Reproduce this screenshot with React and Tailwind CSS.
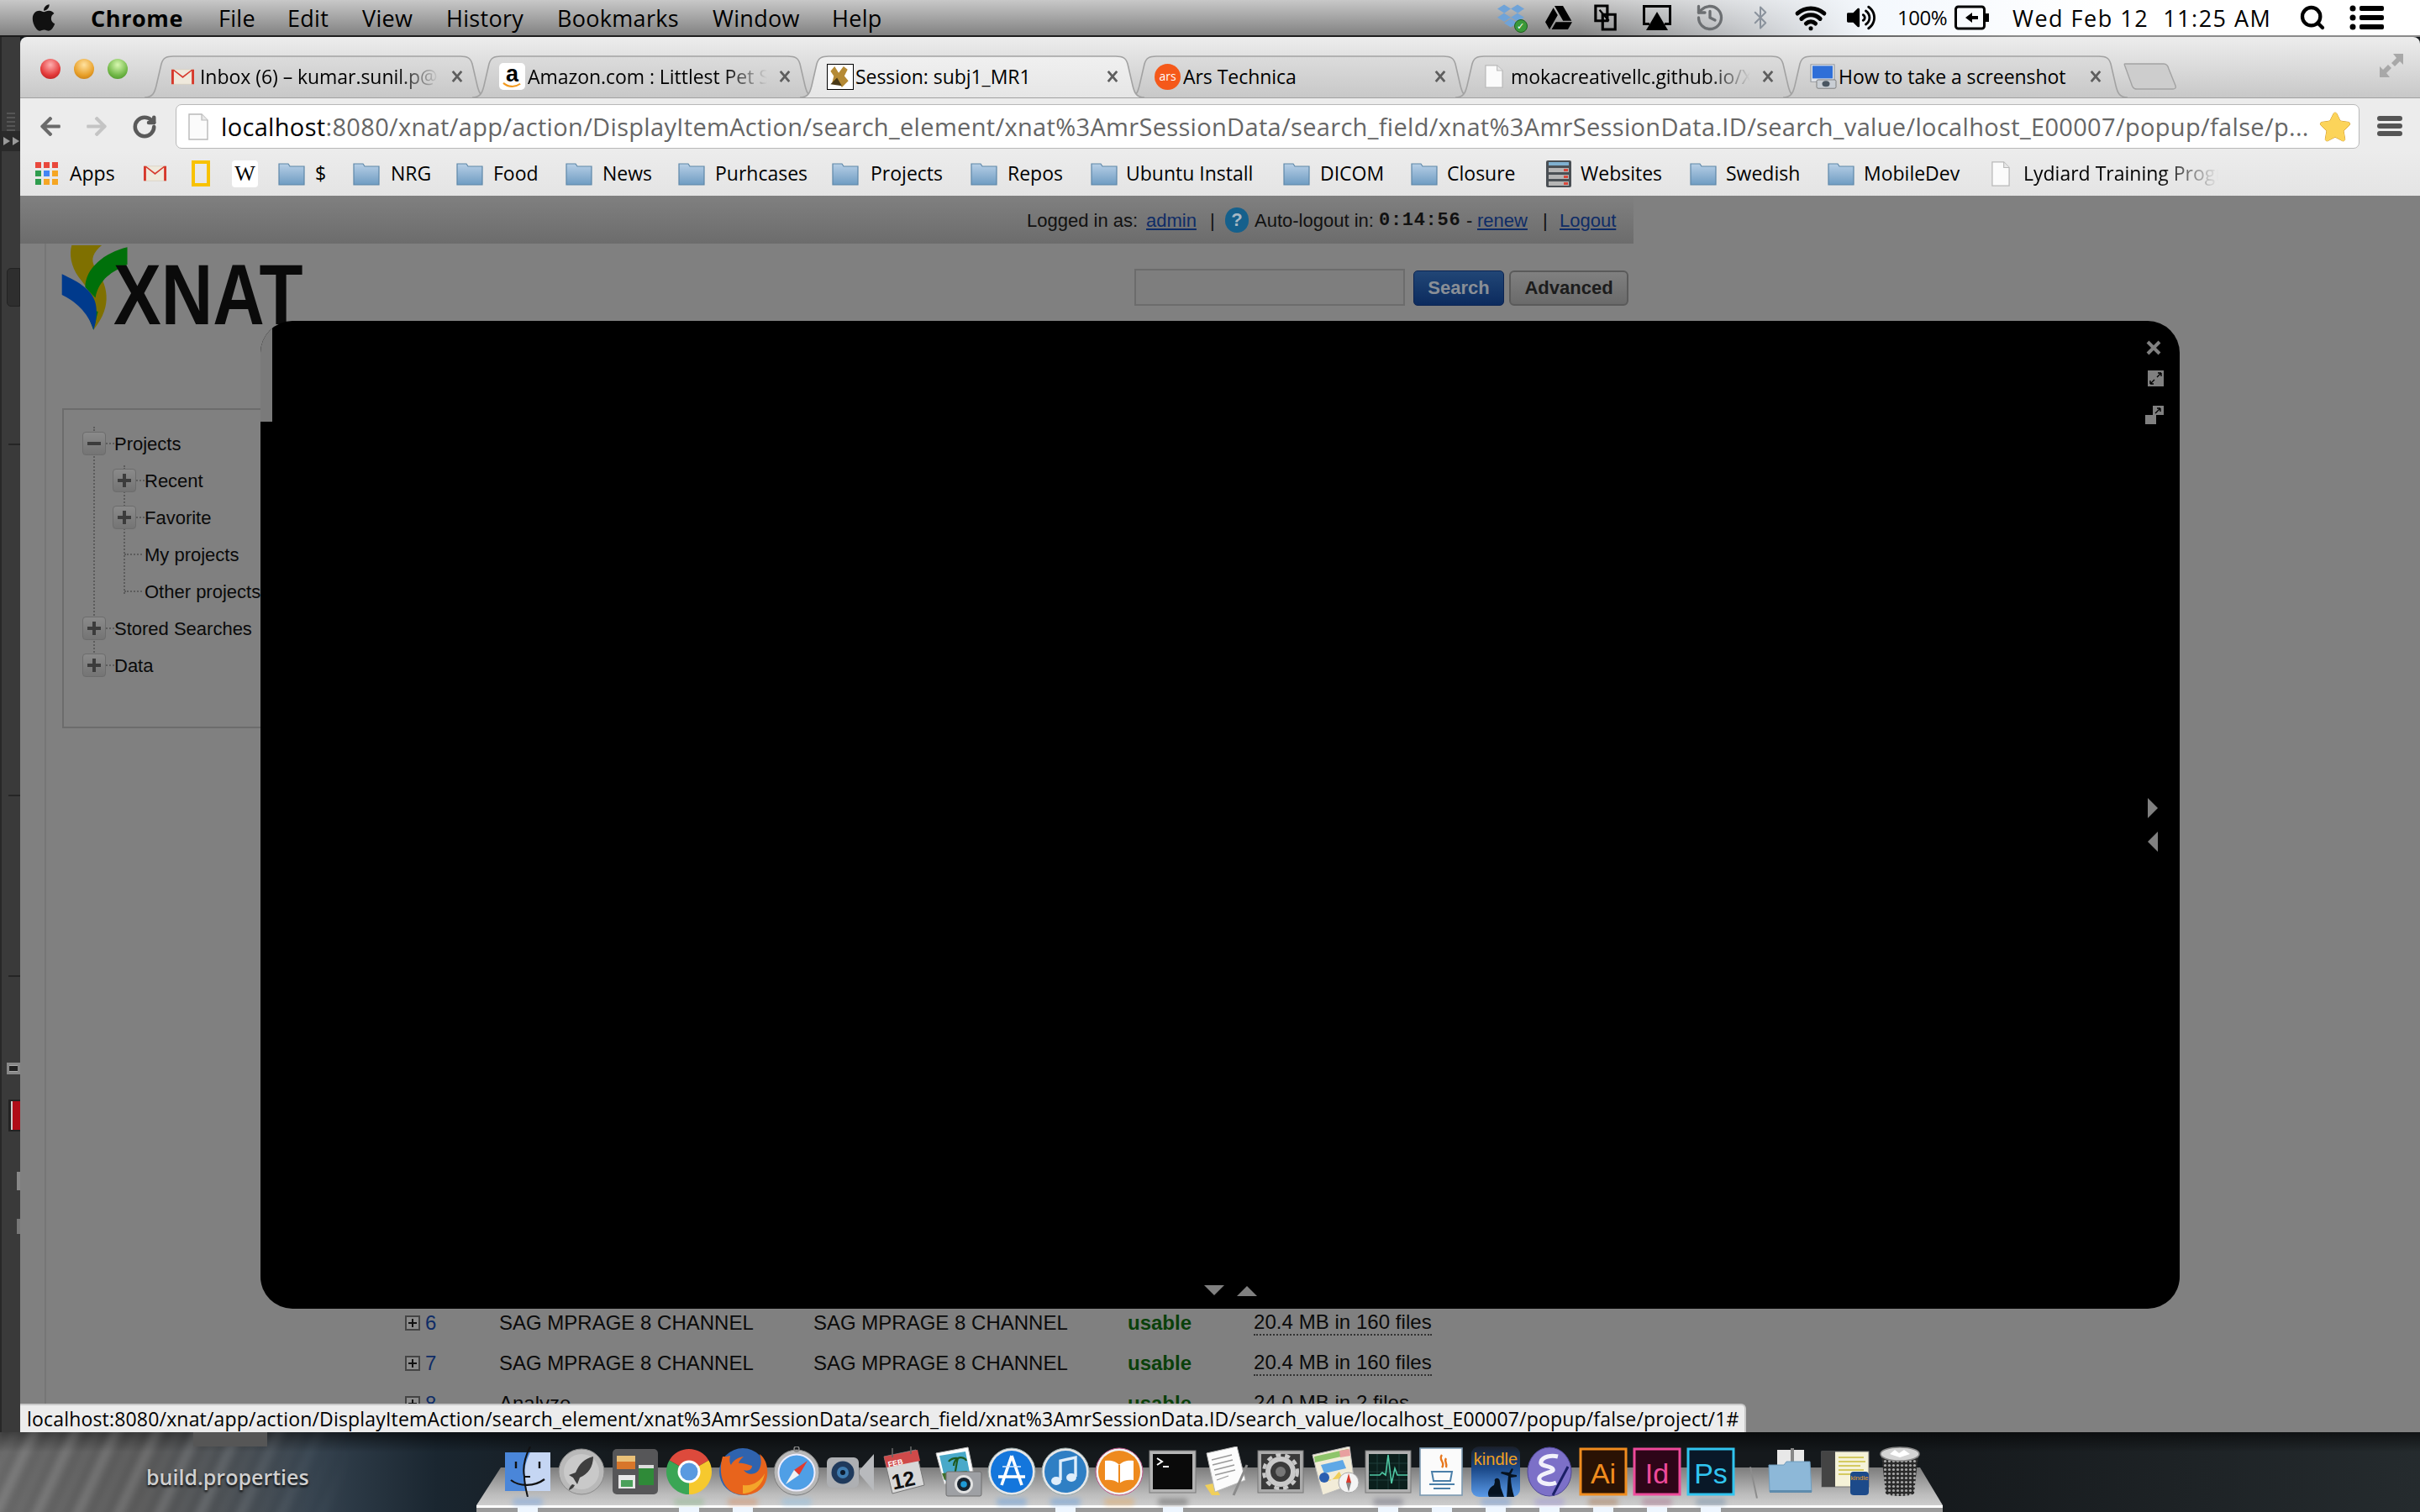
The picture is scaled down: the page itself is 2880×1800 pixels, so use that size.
import React from 'react';
import { FaApple, FaDropbox, FaGoogleDrive, FaVolumeUp, FaStar, FaArrowLeft, FaArrowRight } from 'react-icons/fa';
import { History, Bluetooth, Wifi, Search, RotateCw } from 'lucide-react';

const menus = [
  ['Chrome', 'w-[152px] font-bold text-[27px] tracking-[0.6px]'], ['File', 'w-[82px]'], ['Edit', 'w-[89px]'], ['View', 'w-[100px]'],
  ['History', 'w-[132px]'], ['Bookmarks', 'w-[185px]'], ['Window', 'w-[142px]'], ['Help', 'w-[782px]'],
];

function Cell({ className, children }) {
  return <div className={`flex items-center justify-center h-full ${className}`}>{children}</div>;
}

function MenuBar() {
  return (
    <div className="h-[44px] flex flex-col shrink-0 bg-[linear-gradient(to_right,transparent_1880px,#f4f8fd_2230px,#ffffff_2500px),linear-gradient(to_bottom,#c8c8c8,#7e7e7e)]">
      <div className="h-[42px] flex items-center text-[27px] leading-none text-black tracking-[0.3px]">
        <Cell className="w-[108px]"><FaApple className="w-[34px] h-[36px] text-[#111] mr-[5px]" /></Cell>
        {menus.map(([t, c]) => <div key={t} className={c}>{t}</div>)}
        <Cell className="w-[55px]">
          <span className="relative block w-[36px] h-[36px]">
            <FaDropbox className="w-[32px] h-[32px] text-[#6fa3d8]" />
            <span className="absolute right-0 bottom-0 w-[16px] h-[16px] rounded-full bg-[#3a9a3a] border border-[#1f5f1f] text-white text-[11px] leading-[14px] text-center">✓</span>
          </span>
        </Cell>
        <Cell className="w-[56px]"><FaGoogleDrive className="w-[32px] h-[32px] text-black" /></Cell>
        <Cell className="w-[55px]">
          <svg viewBox="0 0 30 34" className="w-[28px] h-[32px]" fill="none" stroke="#000" strokeWidth="3.4"><path d="M2 2h15v19H2zM11 13h16v19H11z" /><path d="M7 7l12 14" strokeWidth="2.4" /></svg>
        </Cell>
        <Cell className="w-[68px]">
          <svg viewBox="0 0 38 34" className="w-[38px] h-[34px]"><path d="M2 2h34v24h-8v-3h5V5H5v18h5v3H2z" fill="#000" /><path d="M19 10l13 22H6z" fill="#000" /></svg>
        </Cell>
        <Cell className="w-[58px]"><History className="w-[36px] h-[36px] text-[#6c6f72]" strokeWidth={2.2} /></Cell>
        <Cell className="w-[62px]"><Bluetooth className="w-[30px] h-[36px] text-[#8a929c]" strokeWidth={1.6} /></Cell>
        <Cell className="w-[58px]"><Wifi className="w-[44px] h-[38px] text-black" strokeWidth={3.2} /></Cell>
        <Cell className="w-[62px]"><FaVolumeUp className="w-[34px] h-[32px] text-black" /></Cell>
        <div className="w-[72px] pl-[12px] text-[24px] tracking-[-0.5px]">100%</div>
        <Cell className="w-[58px]">
          <svg viewBox="0 0 42 30" className="w-[42px] h-[30px]"><rect x="1.5" y="2" width="34" height="26" rx="3" fill="none" stroke="#000" strokeWidth="3" /><rect x="37" y="10" width="4" height="10" fill="#000" /><path d="M13 15l8-6v4h7v4h-7v4z" fill="#000" /></svg>
        </Cell>
        <div className="ml-[19px] w-[340px] whitespace-pre tracking-[1.5px]">Wed Feb 12  11:25 AM</div>
        <Cell className="w-[34px]"><Search className="w-[32px] h-[32px] text-black" strokeWidth={3.2} /></Cell>
        <Cell className="w-[96px]">
          <svg viewBox="0 0 42 30" className="w-[42px] h-[30px]" fill="#000"><circle cx="4" cy="4" r="3.5" /><circle cx="4" cy="15" r="3.5" /><circle cx="4" cy="26" r="3.5" /><rect x="12" y="1" width="29" height="6" rx="2" /><rect x="12" y="12" width="29" height="6" rx="2" /><rect x="12" y="23" width="29" height="6" rx="2" /></svg>
        </Cell>
      </div>
      <div className="h-[2px] bg-[linear-gradient(to_right,#1c1c1c_1900px,#8a8a8a_2400px)]" />
    </div>
  );
}

function LeftStrip() {
  return (
    <div className="w-[24px] shrink-0 bg-[#3a3a3a] border-l-2 border-[#282828] flex flex-col overflow-hidden">
      <div className="h-[112px] flex flex-col items-center justify-end gap-[3px]">
        {[0, 1, 2, 3, 4].map((i) => <div key={i} className="w-[10px] h-[2px] bg-[#555]" />)}
      </div>
      <div className="h-[24px] bg-[#2a2a2a] flex items-center justify-end gap-[3px] pr-[1px]">
        <span className="w-0 h-0 border-y-[5px] border-y-transparent border-l-[8px] border-l-[#9a9a9a]" />
        <span className="w-0 h-0 border-y-[5px] border-y-transparent border-l-[8px] border-l-[#9a9a9a]" />
      </div>
      <div className="mt-[139px] ml-[6px] h-[46px] bg-[#2e2e2e] border border-[#222] rounded-l-[5px]" />
      <div className="mt-[163px] ml-[8px] h-[2px] bg-[#252525]" />
      <div className="mt-[416px] ml-[8px] h-[2px] bg-[#252525]" />
      <div className="mt-[213px] ml-[8px] h-[2px] bg-[#252525]" />
      <div className="mt-[102px] ml-[6px] h-[14px] bg-[#aaa] border-[3px] border-[#888] flex items-center"><div className="w-[10px] h-[6px] bg-[#222]" /></div>
      <div className="mt-[30px] ml-[8px] h-[38px] bg-[#222] pl-[3px] py-[2px]"><div className="w-full h-full bg-[#b00d18] border-l-2 border-[#ccc]" /></div>
      <div className="mt-[48px] ml-[18px] h-[22px] border-2 border-[#888]" />
      <div className="mt-[34px] ml-[18px] h-[18px] border-2 border-[#777]" />
    </div>
  );
}

function GmailIcon({ className }) {
  return (
    <svg viewBox="0 0 28 24" preserveAspectRatio="none" className={className}>
      <rect x="0.5" y="1" width="27" height="22" fill="#efe9dc" stroke="#d8d0c0" />
      <path d="M14 14L3 3v20H0V1h3l11 10L25 1h3v22h-3V3z" fill="#d6392c" />
    </svg>
  );
}

function DocIcon({ className }) {
  return (
    <svg viewBox="0 0 24 32" preserveAspectRatio="none" className={className}>
      <path d="M1 1h15l7 7v23H1z" fill="#fbfbfb" stroke="#b9b9b9" strokeWidth="1.4" />
      <path d="M16 1v7h7" fill="#e8e8e8" stroke="#b9b9b9" strokeWidth="1.2" />
    </svg>
  );
}

const FavAmazon = (
  <span className="relative w-[31px] h-[32px] bg-white rounded-[5px] flex justify-center font-['Liberation_Sans',sans-serif] font-bold text-[27px] leading-[27px] text-black">
    a
    <svg viewBox="0 0 26 8" className="absolute left-[3px] bottom-[2px] w-[25px] h-[7px]"><path d="M1 1c7 6 16 6 23 1" fill="none" stroke="#f39a1e" strokeWidth="2.4" /></svg>
  </span>
);
const FavXnat = (
  <span className="w-[32px] h-[31px] bg-white border border-black block">
    <svg viewBox="0 0 30 30" className="w-full h-full"><path d="M8 2l5 8 6-8 5 4-4 8 5 6-8 8-5-8-7 2 2-8-4-6z" fill="#b58a35" /><path d="M3 24l8-8 6 10z" fill="#4a3a18" /></svg>
  </span>
);
const FavArs = <span className="w-[31px] h-[31px] rounded-full bg-[#f5591a] text-white text-[14px] leading-[30px] text-center block">ars</span>;
const FavShot = (
  <span className="block w-[32px] h-[30px]">
    <svg viewBox="0 0 32 38" preserveAspectRatio="none" className="w-full h-full"><rect x="1" y="1" width="28" height="26" fill="#dfe3e8" stroke="#8a8f96" /><rect x="3" y="3" width="24" height="19" fill="#2f6fd8" /><rect x="8" y="24" width="23" height="13" rx="2" fill="#c9ced4" stroke="#777" /><circle cx="19" cy="30" r="4.5" fill="#4a5662" /></svg>
  </span>
);

const tabs = [
  { t: 'Inbox (6) – kumar.sunil.p@', fav: <GmailIcon className="w-[27px] h-[19px]" />, fade: true },
  { t: 'Amazon.com : Littlest Pet Shop', fav: FavAmazon, fade: true },
  { t: 'Session: subj1_MR1', fav: FavXnat, active: true },
  { t: 'Ars Technica', fav: FavArs },
  { t: 'mokacreativellc.github.io/XNAT', fav: <DocIcon className="w-[22px] h-[28px] ml-[3px]" />, fade: true },
  { t: 'How to take a screenshot', fav: FavShot },
];

function Tab({ tab, first }) {
  return (
    <div className={`relative w-[410px] h-[50px] shrink-0 ${first ? '' : '-ml-[20px]'} ${tab.active ? 'z-10' : ''}`}>
      <svg viewBox="0 0 410 51" preserveAspectRatio="none" className="absolute inset-0 w-full h-[51px]">
        <defs>
          <linearGradient id="tabIn" x1="0" y1="0" x2="0" y2="1"><stop offset="0" stopColor="#dcdcdc" /><stop offset="1" stopColor="#c8c8c8" /></linearGradient>
          <linearGradient id="tabAc" x1="0" y1="0" x2="0" y2="1"><stop offset="0" stopColor="#f0f0f0" /><stop offset="1" stopColor="#e6e6e6" /></linearGradient>
        </defs>
        <path d="M0 50C10 50 12 44 14 36L20 10C22 3 26 1 34 1L376 1C384 1 388 3 390 10L396 36C398 44 400 50 410 50" fill={tab.active ? 'url(#tabAc)' : 'url(#tabIn)'} stroke="#a2a2a2" strokeWidth="1.6" />
      </svg>
      <div className="absolute inset-0 flex items-center pl-[32px] text-[23px] text-black">
        <span className="w-[32px] flex justify-start shrink-0">{tab.fav}</span>
        <span className={`w-[285px] ml-[2px] overflow-hidden whitespace-nowrap tracking-[-0.05px] ${tab.fade ? '[mask-image:linear-gradient(to_right,#000_82%,transparent_100%)]' : ''}`}>{tab.t}</span>
        <span className="w-[42px] flex justify-center">
          <svg viewBox="0 0 16 18" className="w-[14px] h-[16px]"><path d="M2 2l12 14M14 2L2 16" stroke="#5e5e5e" strokeWidth="3.2" /></svg>
        </span>
      </div>
    </div>
  );
}

function TabStrip() {
  return (
    <div className="relative h-[73px] shrink-0 flex items-end bg-[linear-gradient(to_bottom,#ededed,#c8c8c8)] rounded-t-[8px] pl-[24px] border-b border-[#a2a2a2]">
      <div className="self-start mt-[26px] flex gap-[16px] mr-[20px]">
        <span className="w-[24px] h-[24px] rounded-full bg-[radial-gradient(circle_at_50%_30%,#ffb0b0,#e33a3a_60%,#a81818)]" />
        <span className="w-[24px] h-[24px] rounded-full bg-[radial-gradient(circle_at_50%_30%,#ffe2a0,#e8a02a_60%,#b87010)]" />
        <span className="w-[24px] h-[24px] rounded-full bg-[radial-gradient(circle_at_50%_30%,#d8f8b0,#72b848_60%,#3f8a20)]" />
      </div>
      {tabs.map((t, i) => <Tab key={t.t} tab={t} first={i === 0} />)}
      <svg viewBox="0 0 64 32" className="w-[64px] h-[32px] -ml-[5px] mb-[9px] shrink-0">
        <path d="M2 1h46c3 0 5 2 6 6l8 20c1 3-1 4-3 4H16c-3 0-5-1-6-5L2 4c-1-2-1-3 0-3z" fill="#cdcdcd" stroke="#a2a2a2" strokeWidth="1.4" />
      </svg>
      <svg viewBox="0 0 30 30" className="w-[30px] h-[30px] ml-[240px] mb-[23px] shrink-0" fill="#a8a8a8"><path d="M29 1v13l-4-4-6 6-4-4 6-6-4-5zM1 29V16l4 4 6-6 4 4-6 6 4 5z" /></svg>
    </div>
  );
}

function Toolbar() {
  return (
    <div className="h-[63px] shrink-0 flex items-start pt-[7px] bg-[#ececec]">
      <div className="w-[185px] h-[53px] flex items-center shrink-0">
        <FaArrowLeft className="ml-[21px] w-[30px] h-[27px] text-[#6a6a6a]" />
        <FaArrowRight className="ml-[25px] w-[30px] h-[27px] text-[#c4c4c4]" />
        <RotateCw className="ml-[27px] w-[30px] h-[30px] text-[#5a5a5a]" strokeWidth={3.6} />
      </div>
      <div className="w-[2599px] h-[53px] bg-white border border-[#b8b8b8] rounded-[7px] flex items-center pl-[14px] shrink-0">
        <DocIcon className="w-[24px] h-[32px] shrink-0" />
        <div className="ml-[15px] flex-1 text-[29px] tracking-[0.33px] text-[#666] whitespace-nowrap overflow-hidden"><span className="text-black">localhost</span>:8080/xnat/app/action/DisplayItemAction/search_element/xnat%3AmrSessionData/search_field/xnat%3AmrSessionData.ID/search_value/localhost_E00007/popup/false/p...</div>
        <FaStar className="w-[38px] h-[36px] text-[#fcd45a] mr-[9px] shrink-0 stroke-[#c88a10] [stroke-width:14px] [paint-order:stroke]" />
      </div>
      <div className="ml-[21px] mt-[14px] flex flex-col gap-[3px] shrink-0">
        <span className="w-[30px] h-[6px] rounded-[3px] bg-[#555]" />
        <span className="w-[30px] h-[6px] rounded-[3px] bg-[#555]" />
        <span className="w-[30px] h-[6px] rounded-[3px] bg-[#555]" />
      </div>
    </div>
  );
}

function Folder() {
  return (
    <svg viewBox="0 0 32 28" className="w-[32px] h-[28px] shrink-0">
      <defs><linearGradient id="fld" x1="0" y1="0" x2="0" y2="1"><stop offset="0" stopColor="#b7cfe6" /><stop offset="1" stopColor="#6f9cc2" /></linearGradient></defs>
      <path d="M1 27V2h11l2 3h17v22z" fill="url(#fld)" stroke="#5e87a8" strokeWidth="1.2" />
    </svg>
  );
}

const bookmarks = [
  { t: 'Apps', w: 'w-[129px]', g: 'ml-[14px]', i: (
    <svg viewBox="0 0 27 27" className="w-[27px] h-[27px] shrink-0">
      <path d="M0 0h7v7H0zM10 0h7v7h-7zM20 0h7v7h-7z" fill="#e9483c" />
      <path d="M0 10h7v7H0z" fill="#2f9d4e" /><path d="M10 10h7v7h-7z" fill="#4285f4" /><path d="M20 10h7v7h-7z" fill="#f5a623" />
      <path d="M0 20h7v7H0z" fill="#2f9d4e" /><path d="M10 20h7v7h-7z" fill="#f5a623" /><path d="M20 20h7v7h-7z" fill="#f5a623" />
    </svg>) },
  { w: 'w-[57px]', i: <GmailIcon className="w-[27px] h-[19px]" /> },
  { w: 'w-[48px]', i: <span className="w-[22px] h-[31px] border-[4px] border-[#f8c200] block" /> },
  { w: 'w-[55px]', i: <span className="w-[31px] h-[32px] bg-white rounded-[4px] font-['Liberation_Serif',serif] text-[26px] leading-[32px] text-center text-black block">W</span> },
  { t: '$', w: 'w-[89px]', g: 'ml-[12px]', f: 1 },
  { t: 'NRG', w: 'w-[123px]', g: 'ml-[13px]', f: 1 },
  { t: 'Food', w: 'w-[130px]', g: 'ml-[12px]', f: 1 },
  { t: 'News', w: 'w-[134px]', g: 'ml-[12px]', f: 1 },
  { t: 'Purhcases', w: 'w-[183px]', g: 'ml-[12px]', f: 1 },
  { t: 'Projects', w: 'w-[165px]', g: 'ml-[14px]', f: 1 },
  { t: 'Repos', w: 'w-[143px]', g: 'ml-[12px]', f: 1 },
  { t: 'Ubuntu Install', w: 'w-[229px]', g: 'ml-[10px]', f: 1 },
  { t: 'DICOM', w: 'w-[152px]', g: 'ml-[12px]', f: 1 },
  { t: 'Closure', w: 'w-[161px]', g: 'ml-[11px]', f: 1 },
  { t: 'Websites', w: 'w-[171px]', g: 'ml-[11px]', i: (
    <svg viewBox="0 0 30 32" className="w-[30px] h-[32px] shrink-0"><rect width="30" height="32" rx="2" fill="#4a4f54" /><rect x="3" y="2" width="24" height="4" fill="#7fb0d0" /><rect x="3" y="9" width="24" height="5" fill="#b5b5b5" /><rect x="3" y="17" width="24" height="5" fill="#b5b5b5" /><rect x="3" y="25" width="24" height="5" fill="#b5b5b5" /><path d="M21 10h5v3h-5zM21 18h5v3h-5zM21 26h5v3h-5z" fill="#d8483c" /></svg>) },
  { t: 'Swedish', w: 'w-[164px]', g: 'ml-[11px]', f: 1 },
  { t: 'MobileDev', w: 'w-[195px]', g: 'ml-[11px]', f: 1 },
  { t: 'Lydiard Training Program', w: 'w-[270px]', g: 'ml-[16px]', fade: 1, i: <DocIcon className="w-[22px] h-[30px] shrink-0" /> },
];

function BookmarkBar() {
  return (
    <div className="h-[53px] shrink-0 flex items-center pl-[18px] bg-[linear-gradient(to_bottom,#ececec,#e4e4e4)] text-[23px] text-black">
      {bookmarks.map((b, i) => (
        <div key={i} className={`flex items-center shrink-0 overflow-hidden ${b.w}`}>
          {b.f ? <Folder /> : b.i}
          {b.t && <span className={`${b.g} whitespace-nowrap ${b.fade ? 'w-[232px] overflow-hidden [mask-image:linear-gradient(to_right,#000_70%,transparent_100%)]' : ''}`}>{b.t}</span>}
        </div>
      ))}
    </div>
  );
}

function TreeBox({ minus }) {
  return (
    <span className="relative w-[28px] h-[28px] shrink-0 rounded-[4px] border border-[#6c6c6c] bg-[linear-gradient(to_bottom,#8a8a8a,#747474)] flex items-center justify-center">
      <span className="block w-[16px] h-[4px] bg-[#3c3c3c]" />
      {!minus && <span className="absolute block w-[4px] h-[16px] bg-[#3c3c3c]" />}
    </span>
  );
}

function TreeRow({ label, indent, box, minus }) {
  return (
    <div className={`h-[44px] flex items-center ${indent ? 'pl-[36px]' : ''}`}>
      {box ? <TreeBox minus={minus} /> : <span className="w-[28px] shrink-0 h-[2px]" />}
      <span className={`w-[10px] border-t-2 border-dotted border-[#5c5c5c] ${box ? '' : 'w-[21px] -ml-[14px] mr-[3px]'}`} />
      <span className="whitespace-nowrap">{label}</span>
    </div>
  );
}

function Sidebar() {
  return (
    <div className="relative w-[300px] h-[381px] ml-[50px] border-2 border-[#6c6c6c] pl-[22px] pt-[18px] text-[22px] text-[#0a0a0a] shrink-0">
      <span className="absolute left-[35px] top-[20px] h-[272px] border-l-2 border-dotted border-[#5c5c5c]" />
      <span className="absolute left-[71px] top-[66px] h-[153px] border-l-2 border-dotted border-[#5c5c5c]" />
      <div className="relative">
        <TreeRow label="Projects" box minus />
        <TreeRow label="Recent" box indent />
        <TreeRow label="Favorite" box indent />
        <TreeRow label="My projects" indent />
        <TreeRow label="Other projects" indent />
        <TreeRow label="Stored Searches" box />
        <TreeRow label="Data" box />
      </div>
    </div>
  );
}

const rows = [
  { n: '6', a: 'SAG MPRAGE 8 CHANNEL', b: 'SAG MPRAGE 8 CHANNEL', s: '20.4 MB in 160 files' },
  { n: '7', a: 'SAG MPRAGE 8 CHANNEL', b: 'SAG MPRAGE 8 CHANNEL', s: '20.4 MB in 160 files' },
  { n: '8', a: 'Analyze', b: '', s: '24.0 MB in 2 files' },
];

function SeriesRow({ r }) {
  return (
    <div className="h-[48px] flex items-center text-[24px] text-[#0a0a0a] whitespace-nowrap">
      <span className="relative w-[18px] h-[18px] border-2 border-[#444] bg-[#8c8c8c] flex items-center justify-center shrink-0">
        <span className="block w-[10px] h-[2px] bg-[#111]" /><span className="absolute block w-[2px] h-[10px] bg-[#111]" />
      </span>
      <span className="w-[94px] pl-[6px] text-[#0f2c66] shrink-0">{r.n}</span>
      <span className="w-[374px] shrink-0">{r.a}</span>
      <span className="w-[374px] shrink-0">{r.b}</span>
      <span className="w-[150px] font-bold text-[#0a400a] shrink-0">usable</span>
      <span className="border-b-2 border-dotted border-[#333] leading-[28px] tracking-[0.05px]">{r.s}</span>
    </div>
  );
}

function Logo() {
  return (
    <div className="relative w-[300px] h-[196px] ml-[47px] shrink-0">
      <svg viewBox="160 145 190 255" preserveAspectRatio="none" className="absolute left-0 top-0 w-[85px] h-[106px]">
        <path d="M192 150L272 150C250 170 240 190 255 215C285 260 305 320 250 392C270 330 240 280 210 240C190 210 185 175 192 150Z" fill="#7f7000" />
        <path d="M340 155L340 205C300 225 265 245 255 300L228 270C228 215 280 170 340 155Z" fill="#00700a" />
        <path d="M228 330L250 392L262 340Z" fill="#00700a" />
        <path d="M166 232C210 255 260 280 258 340C258 370 252 385 250 392C235 340 200 310 166 292Z" fill="#003a8c" />
      </svg>
      <span className="absolute left-[64px] top-[10px] origin-left scale-x-[0.835] text-[102px] leading-[102px] font-bold text-[#0a0a0a]">XNAT</span>
    </div>
  );
}

function Modal() {
  return (
    <div className="absolute left-[286px] top-[149px] w-[2284px] h-[1176px] bg-black rounded-[38px] overflow-hidden z-20">
      <div className="absolute left-0 top-0 w-[14px] h-[120px] bg-[#7a7a7a]" />
      <svg viewBox="0 0 18 18" className="absolute left-[2244px] top-[23px] w-[18px] h-[18px]"><path d="M2 2l14 14M16 2L2 16" stroke="#808080" strokeWidth="4" /></svg>
      <svg viewBox="0 0 19 19" className="absolute left-[2246px] top-[59px] w-[19px] h-[19px]"><rect width="19" height="19" fill="#808080" /><path d="M3 16l5-5M3 16v-4M3 16h4M16 3l-5 5M16 3v4M16 3h-4" stroke="#000" strokeWidth="1.4" fill="none" /></svg>
      <svg viewBox="0 0 22 22" className="absolute left-[2243px] top-[101px] w-[22px] h-[22px]"><rect x="0" y="11" width="13" height="11" fill="#808080" /><rect x="9" y="0" width="13" height="11" fill="#808080" /><path d="M12 9l6-6M18 3v4M18 3h-4" stroke="#000" strokeWidth="1.4" fill="none" /></svg>
      <span className="absolute left-[2246px] top-[568px] w-0 h-0 border-y-[12px] border-y-transparent border-l-[12px] border-l-[#808080]" />
      <span className="absolute left-[2246px] top-[608px] w-0 h-0 border-y-[12px] border-y-transparent border-r-[12px] border-r-[#808080]" />
      <span className="absolute left-[1123px] top-[1148px] w-0 h-0 border-x-[12px] border-x-transparent border-t-[12px] border-t-[#808080]" />
      <span className="absolute left-[1162px] top-[1149px] w-0 h-0 border-x-[12px] border-x-transparent border-b-[12px] border-b-[#808080]" />
    </div>
  );
}

function Page() {
  return (
    <div className="relative flex-1 overflow-hidden bg-[#808080] font-['Liberation_Sans',sans-serif]">
      <div className="w-[1920px] h-[57px] bg-[linear-gradient(to_bottom,#808080,#6c6c6c)] text-[22px] text-[#111] relative">
        <div className="h-full flex items-center whitespace-pre pt-[1px]">
          <span className="ml-[1198px] w-[142px]">Logged in as:</span>
          <span className="w-[76px] text-[#0f2c66] underline">admin</span>
          <span className="w-[18px]">|</span>
          <span className="w-[35px]"><span className="block w-[28px] h-[30px] rounded-full bg-[#15608c] text-[#a8b8c4] font-bold text-[22px] leading-[30px] text-center">?</span></span>
          <span className="w-[148px]">Auto-logout in:</span>
          <span className="w-[104px] font-['Liberation_Mono',monospace] font-bold text-[22px] tracking-[0.7px]">0:14:56</span>
          <span className="w-[13px]">-</span>
          <span className="w-[78px] text-[#0f2c66] underline">renew</span>
          <span className="w-[20px]">|</span>
          <span className="text-[#0f2c66] underline">Logout</span>
        </div>
      </div>
      <div className="relative flex h-[196px] w-[1914px]">
        <div className="absolute left-[29px] top-0 h-[1500px] border-l-2 border-[#767676]" />
        <Logo />
        <div className="ml-[979px] mt-[30px] flex items-start text-[22px] font-bold">
          <div className="w-[322px] h-[44px] border-2 border-[#6c6c6c] bg-[#7e7e7e]" />
          <div className="ml-[10px] mt-[2px] w-[108px] h-[42px] rounded-[5px] bg-[linear-gradient(to_bottom,#214676,#0c2b5e)] border border-[#0c2452] text-[#8a8f96] flex items-center justify-center pb-[2px]">Search</div>
          <div className="ml-[6px] mt-[2px] w-[142px] h-[42px] rounded-[6px] bg-[linear-gradient(to_bottom,#808080,#6a6a6a)] border-2 border-[#5a5a5a] text-[#1c1c1c] flex items-center justify-center pb-[2px]">Advanced</div>
        </div>
      </div>
      <div className="flex">
        <Sidebar />
        <div className="ml-[108px] pt-[1065px]">
          {rows.map((r) => <SeriesRow key={r.n} r={r} />)}
        </div>
      </div>
      <Modal />
      <div className="absolute left-0 bottom-0 w-[2054px] h-[34px] z-30 bg-[#ececec] border-t-2 border-r-2 border-[#c9c9c9] rounded-tr-[6px] flex items-center pl-[8px] text-[23px] text-black whitespace-nowrap font-['Open_Sans',sans-serif] tracking-[0.18px] overflow-hidden">
        localhost:8080/xnat/app/action/DisplayItemAction/search_element/xnat%3AmrSessionData/search_field/xnat%3AmrSessionData.ID/search_value/localhost_E00007/popup/false/project/1#
      </div>
    </div>
  );
}

const Ic = ({ children, className = '' }) => <svg viewBox="0 0 60 60" className={`w-[60px] h-[60px] ${className}`}>{children}</svg>;

const dockIcons = [
  <Ic><rect x="3" y="7" width="54" height="46" fill="#c5d6f3" /><path d="M3 7h30c-6 12-8 22-6 30 -2 4 0 10 1 16H3z" fill="#4a86d9" /><path d="M33 0C26 14 24 26 26 36h7M26 36c0 8 2 16 4 24" stroke="#111" strokeWidth="2" fill="none" /><path d="M10 40c10 8 28 8 40-1" stroke="#111" strokeWidth="2.2" fill="none" /><path d="M16 18v8M44 18v8" stroke="#111" strokeWidth="2.4" /></Ic>,
  <Ic><circle cx="30" cy="30" r="27" fill="#b9b9b9" stroke="#8c8c8c" /><circle cx="30" cy="30" r="21" fill="#c9c9c9" /><path d="M44 12c-10 2-17 9-21 19l-8 3 5 3 3 5 2 3 3-8c10-4 16-13 16-25z" fill="#3e3e3e" /><path d="M19 45c-3 3-4 5-4 7 3-1 6-3 7-6z" fill="#3e3e3e" /></Ic>,
  <Ic><rect x="3" y="3" width="54" height="54" rx="5" fill="#565658" /><rect x="8" y="11" width="22" height="16" fill="#d8762a" /><rect x="8" y="11" width="22" height="7" fill="#e9c078" /><rect x="34" y="22" width="18" height="24" fill="#2f8a38" /><rect x="34" y="22" width="18" height="4" fill="#ddd" /><rect x="10" y="34" width="20" height="16" fill="#e8e8e8" /><rect x="13" y="40" width="14" height="8" fill="#4aa05a" /></Ic>,
  <Ic><path d="M6.6 16.5A27 27 0 0 1 53.4 16.5L30 30z" fill="#dd4a3c" /><path d="M53.4 16.5A27 27 0 0 1 30 57L30 30z" fill="#f6c92e" /><path d="M30 57A27 27 0 0 1 6.6 16.5L30 30z" fill="#3aa655" /><circle cx="30" cy="30" r="13.5" fill="#fff" /><circle cx="30" cy="30" r="10.5" fill="#5a9ae0" /></Ic>,
  <Ic><circle cx="30" cy="30" r="28" fill="#2f63ae" /><path d="M6 12c-4 14-3 30 8 40 10 8 28 8 38-2 8-8 9-22 5-32-2-4-4-7-7-9 3 8 2 18-4 22-5 3-12 2-15-3 6 2 10-1 10-5-6-1-9-4-16-3 1-4 4-6 6-8-7 1-13 5-15 10-2-3-2-7-1-11-3 1-6 1-9 1z" fill="#e8641c" /><path d="M30 56c12 0 24-10 26-24-4 8-14 16-26 14z" fill="#f4a52a" /></Ic>,
  <Ic><circle cx="30" cy="31" r="27" fill="#b8b8b8" stroke="#7e7e7e" /><circle cx="30" cy="3" r="3" fill="none" stroke="#888" strokeWidth="1.4" /><circle cx="30" cy="31" r="21.5" fill="#4f9fe6" /><circle cx="30" cy="31" r="21.5" fill="none" stroke="#eef" strokeWidth="2" /><path d="M43 17L27 28l6 6z" fill="#e33b2e" /><path d="M17 45l10-17 6 6z" fill="#f2f2f2" /></Ic>,
  <Ic><rect x="2" y="13" width="38" height="36" rx="6" fill="#aeb0b3" /><circle cx="21" cy="31" r="13.5" fill="#1f3a5c" /><circle cx="21" cy="31" r="7" fill="#3f7cb0" /><circle cx="21" cy="31" r="3" fill="#0c1a2c" /><path d="M58 9v44L41 33v-5z" fill="#b8babd" /></Ic>,
  <Ic><path d="M8 12l38-8 10 42-38 10z" fill="#d8d8d8" stroke="#777" transform="translate(-2 0)" /><path d="M6 12l40-8 3 13-40 8z" fill="#cf4a4a" /><path d="M16 2v11M38 0v9" stroke="#666" strokeWidth="1.6" /><text x="11" y="24" fontSize="9" fontWeight="700" fill="#fff" fontFamily="Liberation Sans" transform="rotate(-12 14 22)">FEB</text><text x="15" y="49" fontSize="25" fontWeight="700" fill="#111" fontFamily="Liberation Sans" transform="rotate(-12 28 40)">12</text></Ic>,
  <Ic><path d="M4 8l38-7 8 38-36 6z" fill="#fff" stroke="#bbb" /><path d="M8 11l31-5 6 30-30 5z" fill="#49a9c9" /><path d="M14 40l10-4 14 1 3-8-30 3z" fill="#406f2a" /><path d="M26 34c2-8 2-14 4-20M30 14c-5-1-10 2-11 4M30 14c4-2 9 0 10 3M30 14c-3 2-5 6-5 9" stroke="#1e5a20" strokeWidth="2.2" fill="none" /><rect x="16" y="30" width="42" height="29" rx="2" fill="#9ea0a4" stroke="#6e6e6e" /><circle cx="37" cy="45" r="11" fill="#e2e2e2" /><circle cx="37" cy="45" r="8" fill="#18242f" /><circle cx="37" cy="45" r="3.8" fill="#1e9ad6" /></Ic>,
  <Ic><circle cx="30" cy="30" r="28" fill="#e8e8e8" stroke="#9aa" /><circle cx="30" cy="30" r="25" fill="#1476dc" /><path d="M30 11L18 46M30 11l12 35M14 36h32" stroke="#fff" strokeWidth="3.6" fill="none" /><path d="M19 24h22" stroke="#cfe6ff" strokeWidth="1.6" /></Ic>,
  <Ic><circle cx="30" cy="30" r="28" fill="#e8e8e8" stroke="#9aa" /><circle cx="30" cy="30" r="25" fill="#2f7fc4" /><path d="M24 40V17l18-4v23" stroke="#dfeefb" strokeWidth="3.4" fill="none" /><ellipse cx="19" cy="41" rx="6" ry="5" fill="#dfeefb" /><ellipse cx="37" cy="37" rx="6" ry="5" fill="#dfeefb" /></Ic>,
  <Ic><circle cx="30" cy="30" r="28" fill="#f2f2f2" stroke="#b58" /><circle cx="30" cy="30" r="25" fill="#ee8a1e" /><path d="M30 22c-4-5-11-6-17-5v23c6-1 13 0 17 4 4-4 11-5 17-4V17c-6-1-13 0-17 5z" fill="#fff" /><path d="M30 22v22" stroke="#ee8a1e" strokeWidth="2" /></Ic>,
  <Ic><rect x="2" y="5" width="55" height="50" fill="#b4b4b4" stroke="#7a7a7a" /><rect x="6" y="9" width="47" height="42" fill="#0a0a0a" /><path d="M11 14l6 4-6 4" stroke="#fff" strokeWidth="2" fill="none" /><path d="M18 24h7" stroke="#fff" strokeWidth="2" /></Ic>,
  <Ic><path d="M4 46L14 44l8 14-10 0z" fill="#f0cf5a" /><path d="M6 8L42 0l10 40-36 14z" fill="#fcfcfc" stroke="#bbb" /><path d="M12 16l24-6M13 22l24-6M15 28l24-6M16 34l24-6M18 40l14-5" stroke="#999" strokeWidth="1.3" /><path d="M54 22L38 58" stroke="#8a8a8a" strokeWidth="3" /></Ic>,
  <Ic><rect x="3" y="5" width="54" height="50" fill="#aaa" stroke="#777" /><rect x="7" y="9" width="46" height="42" fill="#3a3a3a" /><circle cx="30" cy="30" r="15" fill="none" stroke="#c9c9c9" strokeWidth="6" /><circle cx="30" cy="30" r="20" fill="none" stroke="#c9c9c9" strokeWidth="4" strokeDasharray="6 5" /><circle cx="30" cy="30" r="6" fill="#777" /></Ic>,
  <Ic><path d="M4 10l44-10 6 44-38 14z" fill="#f2ecd8" stroke="#bbb" /><path d="M6 12l40-9 1 7-40 9z" fill="#8ec56a" /><path d="M36 5l12-2 1 8-12 2z" fill="#e8a0a0" /><path d="M14 22l26-6 4 10-26 6z" fill="#5fa8e6" /><path d="M20 40c8 4 12-8 16-10l4 8z" fill="#f0cf5a" /><circle cx="18" cy="37" r="6" fill="#2b5fb0" /><circle cx="47" cy="43" r="12" fill="#f4f4f4" stroke="#aaa" /><path d="M47 32l3 11h-6z" fill="#d8392c" /><path d="M47 54l3-11h-6z" fill="#888" /></Ic>,
  <Ic><rect x="3" y="5" width="54" height="50" fill="#b0b0b0" stroke="#777" /><rect x="7" y="9" width="46" height="42" fill="#0b1f1c" /><path d="M7 20h46M7 30h46M7 40h46M17 9v42M30 9v42M43 9v42" stroke="#1f3f3a" /><path d="M8 34h12l3-3 4 3 3-24 4 34 4-18 3 8h12" fill="none" stroke="#4fc9a4" strokeWidth="1.6" /></Ic>,
  <Ic><rect x="4" y="2" width="50" height="56" fill="#fbfbfb" stroke="#7c9ab2" strokeWidth="1.6" /><path d="M30 10c-5 6 5 9 0 15M35 14c-3 4 2 6 0 11" stroke="#e8781e" strokeWidth="2.4" fill="none" /><path d="M18 30h24l-2 11H20z" fill="none" stroke="#4a7ea8" strokeWidth="2" /><path d="M15 45h30M20 50h20" stroke="#4a7ea8" strokeWidth="2" /></Ic>,
  <Ic><defs><linearGradient id="kd" x1="0" y1="0" x2="0" y2="1"><stop offset="0" stopColor="#1a1f2a" /><stop offset="0.45" stopColor="#1c4a8a" /><stop offset="1" stopColor="#5a9ae8" /></linearGradient></defs><rect x="1" y="0" width="58" height="60" rx="9" fill="url(#kd)" /><text x="30" y="22" textAnchor="middle" fontSize="20" fill="#f2a020" fontFamily="Liberation Sans">kindle</text><path d="M43 60c1-9 1-17 2-25l-9-3 1-2 9 1 3-5 2 1-3 6 7 1v2l-7 1c0 8 2 16 4 23z" fill="#06121f" /><path d="M22 60c-3-5 1-12 6-14l1-4c-2-5 6-6 6 0l1 7 4 11z" fill="#06121f" /></Ic>,
  <Ic><ellipse cx="30" cy="30" rx="26" ry="29" fill="#7c70c8" stroke="#4f4698" /><path d="M40 12c-8-2-18 0-20 6s12 5 14 9-14 4-16 10 10 10 20 6" fill="none" stroke="#f1f1fb" strokeWidth="5" /><path d="M52 24L34 58" stroke="#1a1f66" strokeWidth="3" /></Ic>,
  <Ic><rect x="3" y="3" width="54" height="54" fill="#2a1204" stroke="#f08c1e" strokeWidth="3" /><text x="30" y="44" textAnchor="middle" fontSize="34" fill="#f08c1e" fontFamily="Liberation Sans">Ai</text></Ic>,
  <Ic><rect x="3" y="3" width="54" height="54" fill="#2e0518" stroke="#ee4a9a" strokeWidth="3" /><text x="30" y="44" textAnchor="middle" fontSize="34" fill="#ee4a9a" fontFamily="Liberation Sans">Id</text></Ic>,
  <Ic><rect x="3" y="3" width="54" height="54" fill="#091828" stroke="#31c5f0" strokeWidth="3" /><text x="30" y="44" textAnchor="middle" fontSize="34" fill="#31c5f0" fontFamily="Liberation Sans">Ps</text></Ic>,
];

const lastIcons = [
  <Ic><path d="M14 4h32v20H14z" fill="#e8e8e8" /><path d="M30 2h4v22h-4z" fill="#888" /><path d="M4 22h18l3-4h28l2 36H5z" fill="#8db8d8" stroke="#6f9cbd" /><rect x="5" y="52" width="50" height="3" fill="#5f8cad" /></Ic>,
  <Ic><rect x="2" y="6" width="56" height="42" fill="#f5f2d8" stroke="#777" /><rect x="2" y="6" width="16" height="42" fill="#444" /><path d="M22 13h30M22 18h32M22 23h26M22 28h30M22 33h24" stroke="#c9bd3a" strokeWidth="1.6" /><rect x="36" y="30" width="22" height="28" rx="4" fill="#1c4a8a" /><text x="47" y="40" textAnchor="middle" fontSize="8" fill="#f2a020" fontFamily="Liberation Sans">kindle</text></Ic>,
  <Ic><defs><pattern id="mesh" width="5" height="5" patternUnits="userSpaceOnUse"><rect width="5" height="5" fill="#2a2a2a" /><circle cx="2.5" cy="2.5" r="1.6" fill="#a8a8a8" /></pattern></defs><path d="M8 8l5 48c4 4 30 4 34 0l5-48z" fill="url(#mesh)" /><ellipse cx="30" cy="9" rx="23" ry="8" fill="#d4d4d4" stroke="#888" strokeWidth="1.6" /><path d="M18 9l6-5 5 4 6-4 7 5-12 4z" fill="#fff" /></Ic>,
];

const running = [0, 3, 4, 10, 12, 16, 17, 18, 19, 20, 21, 22];
const glow = { 0: 'bg-[#6fa3e8]', 3: 'bg-[#8ab88a]', 4: 'bg-[#d88a5a]', 5: 'bg-[#8ac0e8]', 9: 'bg-[#5a9ae0]', 10: 'bg-[#5a9ae0]', 11: 'bg-[#e8a85a]', 12: 'bg-[#555]', 16: 'bg-[#667]', 18: 'bg-[#6a9ae0]', 19: 'bg-[#9a90d8]', 20: 'bg-[#a8744a]', 21: 'bg-[#a86a8a]', 22: 'bg-[#6a8aa8]' };

function Dock() {
  return (
    <div className="relative h-[95px] shrink-0 overflow-hidden bg-[linear-gradient(to_bottom,rgba(0,0,0,0.55),transparent_24px),linear-gradient(to_right,#747474_0,#5f5f5f_170px,#34424f_370px,#1a2630_520px,#15191c_760px,#15191c_2280px,#252b2e_2880px)] font-['Open_Sans',sans-serif]">
      <div className="absolute -left-[10px] -top-[10px] w-[430px] h-[115px] opacity-35 blur-[5px] bg-[repeating-linear-gradient(115deg,#9a9a9a_0,#9a9a9a_8px,#3c3c3c_16px,#6a6a6a_30px,#2c2c2c_44px)] [mask-image:linear-gradient(to_right,#000_60%,transparent)]" />
      <div className="absolute left-[230px] top-0 w-[88px] h-[17px] bg-[#565656]" />
      <div className="absolute left-[174px] top-[36px] text-[25px] leading-[34px] font-semibold text-[#cfcfcf] [text-shadow:0_2px_3px_#000]">build.properties</div>
      <div className="absolute left-[567px] top-[42px] w-[1745px] h-[53px] bg-[linear-gradient(to_bottom,#7c7c7c,#bcbcbc_60%,#d8d8d8)] [clip-path:polygon(29px_0,1718px_0,1745px_45px,1745px_53px,0_53px,0_45px)]" />
      <div className="absolute left-[567px] top-[87px] w-[1745px] h-[3px] bg-white z-10" />
      <div className="absolute left-[567px] top-[90px] w-[1745px] h-[5px] bg-[#9a9a9a]" />
      <div className="relative flex pl-[596px] pt-[17px] z-10">
        {dockIcons.map((ic, i) => (
          <div key={i} className="relative w-16 h-[78px] flex flex-col items-center shrink-0">
            {ic}
            {glow[i] && <span className={`absolute left-[14px] top-[62px] w-[36px] h-[8px] rounded-full opacity-50 blur-[3px] ${glow[i]}`} />}
            {running.includes(i) && <span className="absolute left-[20px] top-[72px] w-[24px] h-[6px] bg-[#eef6ff]" />}
          </div>
        ))}
        <div className="w-[2px] h-[38px] bg-[#8c8c8c] ml-[18px] mt-[24px] shrink-0 -rotate-[12deg]" />
        <div className="w-[64px] ml-[11px] shrink-0 flex justify-center">{lastIcons[0]}</div>
        <div className="w-[66px] shrink-0 flex justify-center">{lastIcons[1]}</div>
        <div className="w-[64px] shrink-0 flex justify-center">{lastIcons[2]}</div>
      </div>
    </div>
  );
}

export default function App() {
  return (
    <div className="w-[2880px] h-[1800px] flex flex-col overflow-hidden font-['Open_Sans',sans-serif] bg-[#15191c]">
      <MenuBar />
      <div className="h-[1661px] flex shrink-0">
        <LeftStrip />
        <div className="flex-1 flex flex-col min-w-0">
          <TabStrip />
          <Toolbar />
          <BookmarkBar />
          <Page />
        </div>
      </div>
      <Dock />
    </div>
  );
}
